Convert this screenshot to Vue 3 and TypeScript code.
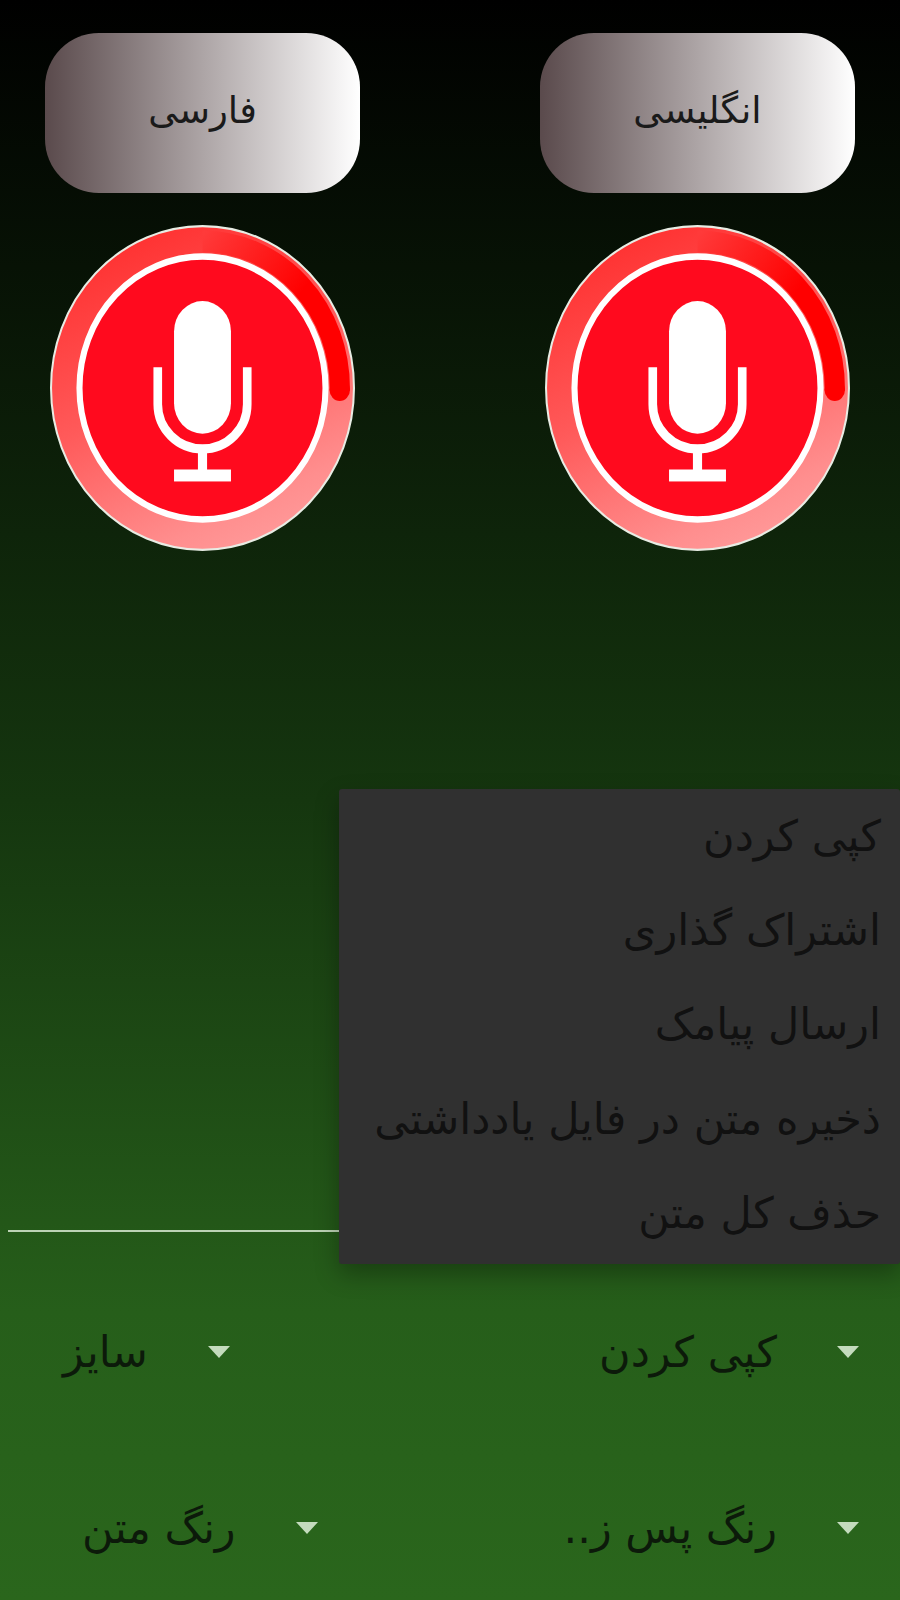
<script setup lang="ts">
const menu: string[] = ['کپی کردن', 'اشتراک گذاری', 'ارسال پیامک', 'ذخیره متن در فایل یادداشتی', 'حذف کل متن']
const langs: string[] = ['فارسی', 'انگلیسی']
</script>

<template>
  <div class="page">
    <div class="langs">
      <div v-for="l in langs" :key="l" class="lang-col">
        <button class="lang">{{ l }}</button>
        <svg class="mic" viewBox="0 0 300 300" preserveAspectRatio="none">
          <defs>
            <linearGradient :id="'ring' + l" x1="0.3" y1="0" x2="0.75" y2="1">
              <stop offset="0" stop-color="#ff3030" />
              <stop offset="0.45" stop-color="#ff5a5a" />
              <stop offset="0.85" stop-color="#ff8e8e" />
              <stop offset="1" stop-color="#ff9c9c" />
            </linearGradient>
            <linearGradient :id="'arc' + l" gradientUnits="userSpaceOnUse" x1="150" y1="10" x2="285" y2="110">
              <stop offset="0" stop-color="#ff3a3a" />
              <stop offset="0.65" stop-color="#ff0000" />
              <stop offset="1" stop-color="#ff0000" />
            </linearGradient>
          </defs>
          <circle cx="150" cy="150" r="149" :fill="`url(#ring${l})`" stroke="#e8ece4" stroke-width="2" />
          <path d="M150 15 A135 135 0 0 1 285 152" fill="none" :stroke="`url(#arc${l})`" stroke-width="20" />
          <circle cx="285" cy="152" r="10" fill="#ff0000" />
          <circle cx="150" cy="150" r="121" fill="#ff0a1e" stroke="#ffffff" stroke-width="6" />
          <rect x="122" y="70" width="56" height="122" rx="28" fill="#ffffff" />
          <path d="M106 131 V165 A44 41 0 0 0 194 165 V131" fill="none" stroke="#ffffff" stroke-width="8.5" />
          <path d="M150 206 V226" fill="none" stroke="#ffffff" stroke-width="9" />
          <rect x="122" y="225" width="56" height="11" fill="#ffffff" />
        </svg>
      </div>
    </div>

    <div class="middle">
      <div class="rule"></div>
      <ul class="menu">
        <li v-for="m in menu" :key="m">{{ m }}</li>
      </ul>
    </div>

    <div class="spinners first">
      <div class="spinner"><span>سایز</span><i></i></div>
      <div class="spinner"><span>کپی کردن</span><i></i></div>
    </div>
    <div class="spinners second">
      <div class="spinner"><span>رنگ متن</span><i></i></div>
      <div class="spinner"><span>رنگ پس ز..</span><i></i></div>
    </div>
  </div>
</template>

<style>
html, body { margin: 0; padding: 0; }
</style>

<style scoped>
.page {
  width: 900px;
  height: 1600px;
  overflow: hidden;
  background: linear-gradient(180deg, #000 0%, #15360f 50%, #265e1a 82%, #2a661c 100%);
  font-family: "DejaVu Sans", "Noto Sans", sans-serif;
  color: #111;
  display: flex;
  flex-direction: column;
}
.langs {
  display: flex;
  flex-shrink: 0;
  justify-content: space-between;
  padding: 33px 45px 0;
}
.lang-col {
  width: 315px;
  display: flex;
  flex-direction: column;
  align-items: center;
}
.lang {
  width: 315px;
  height: 160px;
  border: 0;
  padding: 0 0 6px;
  border-radius: 54px;
  background: linear-gradient(90deg, #5a4a4c 0%, #ffffff 100%);
  font: inherit;
  font-size: 37px;
  color: #1a1a1a;
}
.mic {
  width: 305px;
  height: 326px;
  margin-top: 32px;
  display: block;
  flex-shrink: 0;
  filter: blur(0.5px);
}
.middle {
  position: relative;
  flex-shrink: 0;
  height: 713px;
}
.rule {
  position: absolute;
  left: 8px;
  width: 340px;
  top: 679px;
  height: 2px;
  background: #bcd2b5;
}
.menu {
  position: absolute;
  left: 339px;
  right: 0;
  top: 238px;
  margin: 0;
  padding: 0 0 4px;
  box-sizing: border-box;
  list-style: none;
  background: #303030;
  border-radius: 3px;
  box-shadow: 0 10px 24px rgba(0, 0, 0, 0.3);
  direction: rtl;
  font-size: 43px;
  height: 475px;
  display: flex;
  flex-direction: column;
  justify-content: space-around;
}
.menu li {
  padding: 0 19px;
  color: #111;
  white-space: nowrap;
}
.spinners {
  display: flex;
  flex-shrink: 0;
  justify-content: space-between;
  align-items: center;
  height: 176px;
  padding-right: 41px;
}
.spinners.first { padding-left: 63px; }
.spinners.second { padding-left: 82px; }
.spinner {
  display: flex;
  align-items: center;
  gap: 60px;
  font-size: 43px;
  color: #0c1a0a;
}
.spinner span { direction: rtl; white-space: nowrap; }
.spinner i {
  width: 0;
  height: 0;
  border-left: 11px solid transparent;
  border-right: 11px solid transparent;
  border-top: 12px solid #c4dbbd;
}
</style>
